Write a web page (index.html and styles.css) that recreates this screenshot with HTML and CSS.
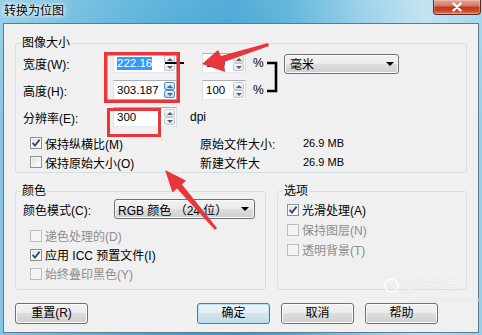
FILE: index.html
```html
<!DOCTYPE html>
<html lang="zh-CN">
<head>
<meta charset="utf-8">
<title>转换为位图</title>
<link rel="stylesheet" href="styles.css">
</head>
<body>
<div class="window">
  <div class="titlebar">
    <span class="title">转换为位图</span>
    <span class="close"><svg width="14" height="10" viewBox="0 0 14 10"><path d="M3.5 1.5 L10.5 8.5 M10.5 1.5 L3.5 8.5" stroke="#fff" stroke-width="2.4" stroke-linecap="round"/></svg></span>
  </div>
  <div class="client">
    <fieldset class="group g-size">
      <legend>图像大小</legend>
      <div class="fields">
        <div class="row">
          <span class="lbl">宽度(W):</span>
          <span class="spin w64"><span class="val"><span class="sel">222.16</span></span><span class="ud"><span class="b up"></span><span class="b dn"></span></span></span>
          <span class="spin w44"><span class="val">100</span><span class="ud"><span class="b up"></span><span class="b dn"></span></span></span>
          <span class="pct">%</span>
          <span class="combo unit"><span class="ctext">毫米</span><span class="arrow"></span></span>
        </div>
        <div class="row">
          <span class="lbl">高度(H):</span>
          <span class="spin w64"><span class="val">303.187</span><span class="ud hot"><span class="b up"></span><span class="b dn"></span></span></span>
          <span class="spin w44"><span class="val">100</span><span class="ud"><span class="b up"></span><span class="b dn"></span></span></span>
          <span class="pct">%</span>
        </div>
        <div class="row">
          <span class="lbl">分辨率(E):</span>
          <span class="spin w64"><span class="val">300</span><span class="ud"><span class="b up"></span><span class="b dn"></span></span></span>
          <span class="unit-t">dpi</span>
        </div>
      </div>
      <div class="checks">
        <div class="crow">
          <span class="cbitem"><span class="cb"><svg width="10" height="10" viewBox="0 0 10 10"><path d="M1.6 4.8 L4 7.6 L8.6 1.6" fill="none" stroke="#34466e" stroke-width="1.8"/></svg></span>保持纵横比(M)</span>
          <span class="info-l">原始文件大小:</span>
          <span class="info-v">26.9 MB</span>
        </div>
        <div class="crow">
          <span class="cbitem"><span class="cb"></span>保持原始大小(O)</span>
          <span class="info-l">新建文件大</span>
          <span class="info-v">26.9 MB</span>
        </div>
      </div>
    </fieldset>

    <div class="bottom">
      <fieldset class="group g-color">
        <legend>颜色</legend>
        <div class="row">
          <span class="lbl lbl2">颜色模式(C):</span>
          <span class="combo rgb"><span class="ctext">RGB 颜色 （24 位）</span><span class="arrow"></span></span>
        </div>
        <div class="checks2">
          <div class="crow2 dis"><span class="cb dis"></span>递色处理的(D)</div>
          <div class="crow2"><span class="cb"><svg width="10" height="10" viewBox="0 0 10 10"><path d="M1.6 4.8 L4 7.6 L8.6 1.6" fill="none" stroke="#34466e" stroke-width="1.8"/></svg></span>应用 ICC 预置文件(I)</div>
          <div class="crow2 dis"><span class="cb dis"></span>始终叠印黑色(Y)</div>
        </div>
      </fieldset>
      <fieldset class="group g-opt">
        <legend>选项</legend>
        <div class="checks3">
          <div class="crow2"><span class="cb"><svg width="10" height="10" viewBox="0 0 10 10"><path d="M1.6 4.8 L4 7.6 L8.6 1.6" fill="none" stroke="#34466e" stroke-width="1.8"/></svg></span>光滑处理(A)</div>
          <div class="crow2 dis"><span class="cb dis"></span>保持图层(N)</div>
          <div class="crow2 dis"><span class="cb dis"></span>透明背景(T)</div>
        </div>
      </fieldset>
    </div>

    <div class="buttons">
      <span class="btn reset">重置(R)</span>
      <span class="btn default">确定</span>
      <span class="btn">取消</span>
      <span class="btn">帮助</span>
    </div>
  </div>

  <div class="watermark">
    <span class="wm-top"><span class="wm-s">S</span>搜狗指南</span>
    <span class="wm-url">zhinan.sogou.com</span>
  </div>

  <svg class="annot" width="482" height="335" viewBox="0 0 482 335">
    <line x1="165" y1="63" x2="184" y2="63" stroke="#000" stroke-width="2"/>
    <polyline points="267,63 276,63 276,91 267,91" fill="none" stroke="#000" stroke-width="2.6"/>
    <rect x="105.75" y="53.75" width="72.5" height="47.5" fill="none" stroke="#e8363b" stroke-width="3.5"/>
    <rect x="108.5" y="109.5" width="51" height="26" fill="none" stroke="#e8363b" stroke-width="3"/>
    <polygon points="202,64 218,50 221,56 268,43 269,46 224,62 225,72" fill="#e8363b"/>
    <polygon points="165,170 186,180.5 182,184.5 217,228 215,230 177,188.5 172.5,192.5" fill="#e8363b"/>
  </svg>
</div>
</body>
</html>
```

FILE: styles.css
```css
* { box-sizing: border-box; }
html, body { margin: 0; padding: 0; }
body {
  width: 482px;
  height: 335px;
  overflow: hidden;
  font-family: "Liberation Sans", "Noto Sans CJK SC", sans-serif;
  font-size: 12px;
  color: #000;
}
.window {
  position: relative;
  width: 482px;
  height: 335px;
  display: flex;
  flex-direction: column;
  background:
    linear-gradient(180deg, rgba(255,255,255,0.18) 0%, rgba(255,255,255,0) 40%),
    linear-gradient(90deg, #84c7e4 0%, #62b6dc 14%, #3fa5d5 32%, #2e9bcf 48%, #45a9d6 60%, #8dcae6 76%, #b8def0 88%, #94cfe9 100%);
}
.titlebar {
  height: 23px;
  display: flex;
  justify-content: space-between;
  align-items: flex-start;
  padding: 0 1px 0 4px;
}
.title {
  line-height: 22px;
  font-size: 12px;
  text-shadow: 0 0 5px #fff, 0 0 3px #fff, 0 0 8px rgba(255,255,255,0.8);
}
.close {
  width: 48px;
  height: 15px;
  display: flex;
  align-items: center;
  justify-content: center;
  border: 1px solid #5e2a20;
  border-top: none;
  border-radius: 0 0 4px 4px;
  background: linear-gradient(180deg, #e6a696 0%, #d87a63 40%, #c2391e 52%, #c84a2b 78%, #dd8466 100%);
  box-shadow: inset 0 0 0 1px rgba(255,255,255,0.25);
}
.client {
  margin: 0 3px;
  height: 310px;
  background: #f0f0f0;
  border: 1px solid #62788c;
  padding: 12px 11px 8px;
  display: flex;
  flex-direction: column;
}
.group {
  margin: 0;
  padding: 3px 7px 1px;
  border: 1px solid #d5dfe5;
  border-radius: 3px;
  min-width: 0;
}
.group legend {
  padding: 0 1px;
  margin-left: -2px;
  height: 14px;
  line-height: 14px;
  font-size: 12px;
}
.fields {
  display: flex;
  flex-direction: column;
  gap: 7px;
}
.row {
  display: flex;
  align-items: center;
  height: 20px;
}
.lbl { width: 90px; }
.lbl2 { width: 91px; }
.spin {
  display: flex;
  height: 20px;
  border: 1px solid #abadb3;
  border-left-color: #dbdfe6;
  border-right-color: #dbdfe6;
  border-bottom-color: #e3e9ef;
  background: #fff;
  padding: 1px;
}
.w64 { width: 64px; }
.w44 { width: 44px; margin-left: 25px; }
.val {
  flex: 1;
  padding-left: 2px;
  line-height: 16px;
  font-size: 11.5px;
  white-space: nowrap;
  overflow: hidden;
}
.sel {
  display: inline-block;
  background: #3399ff;
  color: #fff;
  line-height: 13px;
}
.ud {
  width: 11px;
  display: flex;
  flex-direction: column;
}
.ud .b {
  flex: 1;
  border: 1px solid #c4c9d1;
  border-radius: 2px;
  background: linear-gradient(180deg, #f8f8f8, #e3e5e8);
  display: flex;
  align-items: center;
  justify-content: center;
}
.ud.hot .b {
  border-color: #5a8fbd;
  background: linear-gradient(180deg, #e6f4fc, #aed7f1);
}
.ud .b::after {
  content: "";
  border-left: 3px solid transparent;
  border-right: 3px solid transparent;
}
.ud .up::after { border-bottom: 3px solid #4f6079; }
.ud .dn::after { border-top: 3px solid #4f6079; }
.pct { width: 10px; margin-left: 7px; }
.unit-t { margin-left: 13px; }
.combo {
  display: flex;
  align-items: center;
  justify-content: space-between;
  height: 20px;
  border: 1px solid #707070;
  border-radius: 3px;
  background: linear-gradient(180deg, #f2f2f2 0%, #ebebeb 50%, #dddddd 50%, #cfcfcf 100%);
  box-shadow: inset 0 0 0 1px #fbfbfb;
  white-space: nowrap;
}
.combo .arrow {
  width: 0;
  height: 0;
  border-left: 4px solid transparent;
  border-right: 4px solid transparent;
  border-top: 4px solid #000;
}
.unit { width: 115px; margin-left: 21px; padding: 0 4px 0 5px; margin-top: 1px; }
.rgb { width: 141px; padding: 0 5px 0 3px; }
.checks {
  margin-top: 7px;
  display: flex;
  flex-direction: column;
  gap: 1px;
}
.crow {
  display: flex;
  align-items: center;
  height: 18px;
}
.cbitem {
  width: 170px;
  margin-left: 7px;
  display: flex;
  align-items: center;
  gap: 3px;
}
.info-l { width: 103px; }
.info-v { font-size: 11px; }
.cb {
  width: 12px;
  height: 12px;
  flex: none;
  display: inline-flex;
  align-items: center;
  justify-content: center;
  border: 1px solid #8e8f8f;
  background: linear-gradient(135deg, #dadcde 0%, #f4f4f4 60%, #ffffff 100%);
  box-shadow: inset 0 0 0 1px #f7f7f7;
}
.cb.dis {
  border-color: #bcbcbc;
  background: #f4f4f4;
  box-shadow: none;
}
.bottom {
  display: flex;
  gap: 11px;
  margin-top: 11px;
}
.g-color { width: 251px; padding: 1px 7px 6px; }
.g-opt { width: 190px; padding: 1px 7px 6px; }
.checks2 {
  margin-top: 7px;
  display: flex;
  flex-direction: column;
}
.crow2 {
  height: 19px;
  display: flex;
  align-items: center;
  gap: 3px;
  margin-left: 7px;
}
.crow2.dis { color: #8d8d8d; }
.checks3 {
  margin-top: 1px;
  display: flex;
  flex-direction: column;
  gap: 1px;
}
.checks3 .crow2 { margin-left: 2px; }
.buttons {
  display: flex;
  gap: 11px;
  margin-top: 13px;
  padding-right: 29px;
}
.btn {
  width: 73px;
  height: 21px;
  line-height: 19px;
  text-align: center;
  border: 1px solid #707070;
  border-radius: 3px;
  background: linear-gradient(180deg, #f2f2f2 0%, #ebebeb 50%, #dddddd 50%, #cfcfcf 100%);
  box-shadow: inset 0 0 0 1px #fcfcfc;
}
.btn.reset { margin-right: auto; }
.btn.default {
  border-color: #3c7fb1;
  background: linear-gradient(180deg, #eef5f9 0%, #e2edf3 50%, #d3e4ee 50%, #c5dbe8 100%);
  box-shadow: inset 0 0 0 1px #b9e2f7;
}
.watermark {
  position: absolute;
  left: 384px;
  top: 277px;
  display: flex;
  flex-direction: column;
  align-items: flex-start;
  color: rgba(255,255,255,0.75);
  text-shadow: 0 0 1px rgba(150,150,150,0.3);
  pointer-events: none;
}
.wm-top {
  display: flex;
  align-items: center;
  gap: 2px;
  font-size: 14px;
  line-height: 16px;
  letter-spacing: 1px;
}
.wm-s {
  width: 15px;
  height: 15px;
  border-radius: 50%;
  border: 2px solid rgba(255,255,255,0.75);
  font-size: 10px;
  line-height: 11px;
  text-align: center;
  font-weight: bold;
  letter-spacing: 0;
}
.wm-url {
  margin-top: 2px;
  margin-left: 30px;
  font-size: 8px;
  line-height: 9px;
}
.annot {
  position: absolute;
  left: 0;
  top: 0;
  pointer-events: none;
}
```
